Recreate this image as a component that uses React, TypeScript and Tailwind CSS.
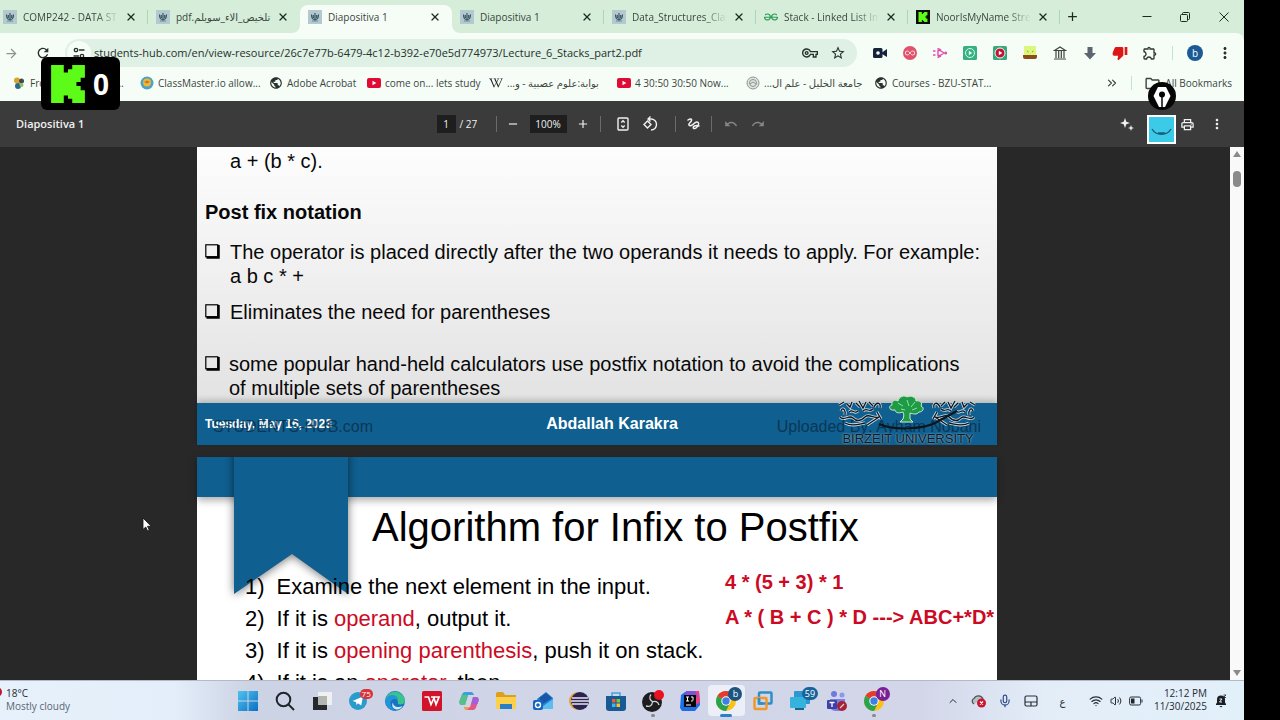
import React from 'react';
import { FaWikipediaW } from 'react-icons/fa';
import {
  MdAdd,
  MdArrowForward,
  MdMoreVert,
  MdOutlineExtension,
  MdOutlineFolder,
  MdOutlinePrint,
  MdOutlineVpnKey,
  MdPublic,
  MdRedo,
  MdRefresh,
  MdRemove,
  MdStarOutline,
  MdThumbDown,
  MdUndo,
} from 'react-icons/md';
import { SiGeeksforgeeks } from 'react-icons/si';
import { ChevronUp, ChevronsRight, Mic, Volume2, Wifi, X } from 'lucide-react';

const KICK_PATH = 'M0 0h12v7h4V4h4V0h12v12h-4v4h-4v4h4v4h4v12H20v-4h-4v-3h-4v7H0z';

const HubIcon = () => (
  <svg viewBox="0 0 14 14" className="h-3.5 w-3.5 shrink-0">
    <rect width="14" height="14" fill="#b3c8cf" />
    <path d="M3.500 4.500c0 4 1 5 3.500 5s3.500-1 3.500-5M7 3v8M5.300 5v3M8.700 5v3" stroke="#355560" strokeWidth="1.200" fill="none" />
    <path d="M4 11h6" stroke="#6d8890" />
  </svg>
);

const KickIcon = () => (
  <svg viewBox="0 0 14 14" className="h-3.5 w-3.5 shrink-0">
    <rect width="14" height="14" fill="#0b0d0b" />
    <path d={KICK_PATH} transform="translate(2.5 2) scale(.28)" fill="#5dfb18" />
  </svg>
);

const YoutubeIcon = () => (
  <svg viewBox="0 0 14 14" className="h-3.5 w-3.5 shrink-0">
    <rect y="2" width="14" height="10" rx="2" fill="#e00b35" />
    <path d="M5.5 4.8v4.4L9.300 7z" fill="#fff" />
  </svg>
);

const tabs = [
  { title: 'COMP242 - DATA ST', icon: <HubIcon />, cell: 'w-[148px] pl-[3px]', fade: true, line: true },
  { title: 'تلخيص_الاء_سويلم.pdf', icon: <HubIcon />, cell: 'w-[152px] pl-2 rounded-br-lg', rtl: true },
  { title: 'Diapositiva 1', icon: <HubIcon />, cell: 'w-[152px]', active: true },
  { title: 'Diapositiva 1', icon: <HubIcon />, cell: 'w-[152px] pl-2 rounded-bl-lg', line: true },
  { title: 'Data_Structures_Clas', icon: <HubIcon />, cell: 'w-[152px] pl-2', fade: true, line: true },
  {
    title: 'Stack - Linked List Im',
    icon: <SiGeeksforgeeks className="h-3.5 w-3.5 shrink-0 text-[#2f9e57]" />,
    cell: 'w-[152px] pl-2',
    fade: true,
    line: true,
  },
  { title: 'NoorIsMyName Stre', icon: <KickIcon />, cell: 'w-[152px] pl-2', fade: true, line: true },
];

const bookmarks = [
  {
    name: 'From the Cloud Se...',
    width: 'w-[128px]',
    icon: (
      <svg viewBox="0 0 14 14" className="h-3.5 w-3.5 shrink-0">
        <circle cx="5" cy="4.5" r="3" fill="#d8a422" />
        <circle cx="9.5" cy="5" r="2.5" fill="#3d4a50" />
        <circle cx="6" cy="10" r="3" fill="#2b6a8a" />
        <circle cx="9.5" cy="9" r="2" fill="#8fbf5a" />
      </svg>
    ),
  },
  {
    name: 'ClassMaster.io allow...',
    width: 'w-[129px]',
    icon: (
      <svg viewBox="0 0 14 14" className="h-3.5 w-3.5 shrink-0">
        <circle cx="7" cy="7" r="6.5" fill="#49a3c7" />
        <circle cx="7" cy="6.5" r="4" fill="#f0b637" />
        <path d="M4 6l3-1.5L10 6 7 7.500z" fill="#c9781f" />
      </svg>
    ),
  },
  { name: 'Adobe Acrobat', width: 'w-[98px]', icon: <MdPublic className="h-3.5 w-3.5 shrink-0 text-[#2a3230]" /> },
  { name: 'come on... lets study', width: 'w-[122px]', icon: <YoutubeIcon /> },
  {
    name: 'بوابة:علوم عصبية - و...',
    width: 'w-[128px]',
    rtl: true,
    icon: <FaWikipediaW className="h-3 w-3.5 shrink-0 text-[#20242a]" />,
  },
  { name: '4 30:50 30:50 Now...', width: 'w-[129px]', icon: <YoutubeIcon /> },
  {
    name: 'جامعة الخليل - علم ال...',
    width: 'w-[128px]',
    rtl: true,
    icon: (
      <svg viewBox="0 0 14 14" className="h-3.5 w-3.5 shrink-0" fill="none" stroke="#8d9690">
        <circle cx="7" cy="7" r="6" fill="#dfe5e0" />
        <circle cx="7" cy="7" r="3.500" />
        <path d="M4 8l3-2 3 2" />
      </svg>
    ),
  },
  { name: 'Courses - BZU-STAT...', width: 'w-[128px]', icon: <MdPublic className="h-3.5 w-3.5 shrink-0 text-[#2a3230]" /> },
];

const extensions = [
  {
    name: 'Camera',
    icon: (
      <svg viewBox="0 0 14 14" className="h-3.5 w-3.5">
        <rect y="2" width="9.500" height="10" rx="1.500" fill="#16233c" />
        <path d="M9 6.500L14 3v8L9 8z" fill="#16233c" />
        <circle cx="5" cy="7" r="1.800" fill="#fff" />
      </svg>
    ),
  },
  {
    name: 'Infinity',
    icon: (
      <svg viewBox="0 0 14 14" className="h-3.5 w-3.5">
        <circle cx="7" cy="7" r="7" fill="#e0526b" />
        <path d="M7 7c-1-1.500-1.800-2-2.700-2a2 2 0 0 0 0 4C5.200 9 6 8.500 7 7s1.800-2 2.700-2a2 2 0 0 1 0 4C8.800 9 8 8.500 7 7z" stroke="#fbdde1" fill="none" />
      </svg>
    ),
  },
  {
    name: 'Player',
    icon: (
      <svg viewBox="0 0 14 14" className="h-3.5 w-3.5" fill="none" stroke="#e04fae" strokeWidth="1.400">
        <path d="M5 4.500h2l4 2.500-4 2.500H5z" />
        <path d="M4.500 2.500L8 4M4.500 11.500L8 10M0 5h2.500M0 9h2.500" />
        <circle cx="12.800" cy="7" r=".8" />
      </svg>
    ),
  },
  {
    name: 'Recorder',
    icon: (
      <svg viewBox="0 0 14 14" className="h-3.5 w-3.5">
        <rect width="14" height="14" rx="1.500" fill="#35b181" />
        <circle cx="7" cy="7" r="4.500" stroke="#d9f7e8" fill="none" />
        <path d="M5.800 4.800v4.400L9.300 7z" fill="#e9fff3" />
      </svg>
    ),
  },
  {
    name: 'Video speed',
    icon: (
      <svg viewBox="0 0 14 14" className="h-3.5 w-3.5">
        <rect width="14" height="14" rx="1.500" fill="#35a97c" />
        <circle cx="7" cy="7" r="5" fill="#c51236" stroke="#e8fff2" />
        <path d="M5.800 4.800v4.400L9.300 7z" fill="#fff" />
      </svg>
    ),
  },
  {
    name: 'Cake',
    icon: (
      <svg viewBox="0 0 14 14" className="h-3.5 w-3.5">
        <path d="M1 0h12v9H1z" fill="#dcf77c" />
        <path d="M4 5l1.500 1M9 6l1.500-1" stroke="#8ca32c" />
        <path d="M0 9h14v2a2 2 0 0 1-2 2H2a2 2 0 0 1-2-2z" fill="#8c4d1c" />
      </svg>
    ),
  },
  {
    name: 'Archive',
    icon: (
      <svg viewBox="0 0 14 14" className="h-3.5 w-3.5" fill="none" stroke="#3b4440" strokeWidth="1.200">
        <path d="M1.500 4.500L7 1l5.500 3.500zM1 13h12M3 5v7M5.700 5v7M8.300 5v7M11 5v7" />
      </svg>
    ),
  },
  {
    name: 'Downloader',
    icon: (
      <svg viewBox="0 0 14 14" className="h-3.5 w-3.5">
        <path d="M4.500 1h5v6H13l-6 6.500L1 7h3.500z" fill="#5d6570" />
      </svg>
    ),
  },
  { name: 'Dislikes', icon: <MdThumbDown className="h-4 w-4 text-[#dd1616]" /> },
  { name: 'Extensions', icon: <MdOutlineExtension className="h-4 w-4 text-[#2e3833]" /> },
];

const ChromeIcon = ({ badge, color }: { badge: string; color: string }) => (
  <span className="relative">
    <svg viewBox="0 0 20 20" className="h-5 w-5">
      <circle cx="10" cy="10" r="10" fill="#fbc116" />
      <path d="M10 10L1.340 5A10 10 0 0 1 18.660 5z" fill="#e33b2e" />
      <path d="M10 10L1.340 5A10 10 0 0 0 10 20l4-8z" fill="#2ba24c" />
      <circle cx="10" cy="10" r="4.700" fill="#fff" />
      <circle cx="10" cy="10" r="3.700" fill="#3d7fe8" />
    </svg>
    <span className={`absolute -right-1.5 -top-1 flex h-3.5 w-3.5 items-center justify-center rounded-full text-[9px] leading-none text-white ${color}`}>
      {badge}
    </span>
  </span>
);

const apps = [
  {
    name: 'Start',
    icon: (
      <svg viewBox="0 0 20 20" className="h-5 w-5">
        <defs>
          <linearGradient id="win" x1="0" y1="0" x2="1" y2="1">
            <stop stopColor="#4fc3ee" />
            <stop offset="1" stopColor="#0b6fc2" />
          </linearGradient>
        </defs>
        <path d="M0 0h9.500v9.500H0zM10.500 0H20v9.500h-9.500zM0 10.500h9.500V20H0zM10.500 10.500H20V20h-9.500z" fill="url(#win)" />
      </svg>
    ),
  },
  {
    name: 'Search',
    icon: (
      <svg viewBox="0 0 20 20" className="h-5 w-5" fill="none" stroke="#20242c" strokeWidth="2">
        <circle cx="8.500" cy="8.500" r="6.800" />
        <path d="M13.500 13.500L19 19" />
      </svg>
    ),
  },
  {
    name: 'Task view',
    icon: (
      <svg viewBox="0 0 20 20" className="h-5 w-5">
        <rect x="6" y="1" width="14" height="13" fill="#eef0f1" />
        <rect x="1" y="6" width="14" height="13" fill="#26292b" />
        <rect x="6" y="5" width="9" height="9" fill="#b2b5b0" />
      </svg>
    ),
  },
  {
    name: 'Telegram',
    icon: (
      <span className="relative">
        <svg viewBox="0 0 20 20" className="h-5 w-5">
          <circle cx="9" cy="10" r="9" fill="#2b9bcb" />
          <path d="M3.500 10l10.500-4.500-1.800 9-3.200-2.300L7.500 14l-.5-3z" fill="#fff" />
        </svg>
        <span className="absolute -right-1 -top-0.5 rounded-full bg-[#d8323a] px-0.5 text-[8px] leading-[10px] text-white">75</span>
      </span>
    ),
  },
  {
    name: 'Edge',
    icon: (
      <svg viewBox="0 0 20 20" className="h-5 w-5">
        <circle cx="10" cy="10" r="10" fill="#1673c4" />
        <path d="M0.500 8A10 10 0 0 1 20 9c0 3-2 4.500-5 4.500-2 0-2.500-1-2-2C13 9 11 6.500 7.500 6.500 4 6.500 1.500 8 .5 10z" fill="#39c48d" />
        <path d="M.500 9C2 5 5 3.500 8 4c4 .5 5.500 3.500 4.700 6C12 7.500 6 6.500 5.500 12c0 4 3 7 6 7.700A10 10 0 0 1 .5 9z" fill="#2394d8" />
        <path d="M8 11.500c0 4 5 6 9.500 3.500-1 2-3 3.500-5.500 3.500-4 0-6-4-4-7z" fill="#cfe9f5" />
      </svg>
    ),
  },
  {
    name: 'WPS Office',
    icon: (
      <svg viewBox="0 0 20 20" className="h-5 w-5">
        <rect width="20" height="20" rx="1.500" fill="#d3132c" />
        <path d="M2.500 6h4l2.500 7.500L12 7l2 6.500L17 6H9" fill="none" stroke="#fff" strokeWidth="1.700" />
      </svg>
    ),
  },
  {
    name: 'Copilot',
    icon: (
      <svg viewBox="0 0 20 20" className="h-5 w-5">
        <path d="M6 1h6c2 0 2.500 1.500 3 3H9L6 14H3c-2 0-3-1.500-2.500-4L3 3.500C3.500 2 4.500 1 6 1z" fill="#3b9de0" />
        <path d="M.5 10L3 3.500 9 4 6 14H3c-2 0-3-1.500-2.500-4z" fill="#57c08a" />
        <path d="M14 19H8c-2 0-2.500-1.500-3-3h6l3-10h3c2 0 3 1.500 2.500 4L17 16.500c-.5 1.500-1.500 2.500-3 2.500z" fill="#e2568e" />
        <path d="M14 6h3c2 0 3 1.500 2.500 4l-1 3h-6z" fill="#a45fd6" />
        <path d="M8 19c-2 0-2.500-1.500-3-3h6z" fill="#f0a23c" />
      </svg>
    ),
  },
  {
    name: 'File Explorer',
    icon: (
      <svg viewBox="0 0 22 20" className="h-5 w-[22px]">
        <path d="M1 3c0-1 .5-2 2-2h5l2 3h11v5H1z" fill="#dc9f1e" />
        <path d="M1 6h20v12H1z" fill="#fbd04a" />
        <path d="M5 13h12v5H5z" fill="#2a7fc4" />
      </svg>
    ),
  },
  {
    name: 'Outlook',
    icon: (
      <svg viewBox="0 0 20 20" className="h-5 w-5">
        <path d="M4 8l9-7 7 6v10H6z" fill="#2380d4" />
        <path d="M6 7l7-5 6 5-9 6z" fill="#1a56a8" />
        <path d="M6 18l14-10v10z" fill="#59bdf2" />
        <rect y="9" width="10" height="10" rx="2" fill="#1565bf" />
        <circle cx="5" cy="14" r="2.500" stroke="#fff" strokeWidth="1.400" fill="none" />
      </svg>
    ),
  },
  {
    name: 'Eclipse',
    icon: (
      <svg viewBox="0 0 20 20" className="h-5 w-5">
        <circle cx="9" cy="10" r="9" fill="#e8a03b" />
        <circle cx="11" cy="10" r="9" fill="#2b2452" />
        <path d="M3 7h16M2 10h18M3 13h16" stroke="#e9e6f2" strokeWidth="1.300" />
      </svg>
    ),
  },
  {
    name: 'Microsoft Store',
    icon: (
      <svg viewBox="0 0 20 20" className="h-5 w-5">
        <path d="M6 5V2h8v3" stroke="#3fa3dc" strokeWidth="1.500" fill="none" />
        <path d="M0 5h20v12a3 3 0 0 1-3 3H3a3 3 0 0 1-3-3z" fill="#175a94" />
        <path d="M6 8h3.500v3.500H6z" fill="#ee5b37" />
        <path d="M10.500 8H14v3.500h-3.500z" fill="#85c141" />
        <path d="M6 12.500h3.500V16H6z" fill="#3fb4ee" />
        <path d="M10.500 12.500H14V16h-3.500z" fill="#fbc02d" />
      </svg>
    ),
  },
  {
    name: 'OBS Studio',
    running: 'w-1 bg-[#84898f]',
    icon: (
      <svg viewBox="0 0 22 22" className="h-[22px] w-[22px]">
        <circle cx="10" cy="12" r="10" fill="#1d1d20" />
        <g fill="none" stroke="#d6d6d8" strokeWidth="1.300">
          <path d="M9 4.500c-2.500 3-1 6 2 7.500M17 15c-1-3.500-4-4.500-7-3M4 16c4 1 6-.5 6.500-4" />
        </g>
        <circle cx="17" cy="5" r="5" fill="#ea1220" />
      </svg>
    ),
  },
  {
    name: 'IntelliJ IDEA',
    icon: (
      <svg viewBox="0 0 20 20" className="h-5 w-5">
        <path d="M1 4l4-3h14l1 13-5 6H2l-2-3z" fill="#1c6fe8" />
        <path d="M13 0h6l1 11-4 3z" fill="#ef3f7f" />
        <path d="M6 0h9l3 6H4z" fill="#7c52d8" />
        <rect x="4" y="4" width="12" height="12" fill="#07070a" />
        <path d="M6 6h3M7.500 6v4M6 10h3M11 6h2v3c0 1-.5 1-2 1M6 14h5" stroke="#fff" fill="none" />
      </svg>
    ),
  },
  { name: 'Chrome', active: true, running: 'w-3 bg-[#2c80c9]', icon: <ChromeIcon badge="b" color="bg-[#1c5480]" /> },
  {
    name: 'VMware',
    icon: (
      <svg viewBox="0 0 20 20" className="h-5 w-5" fill="none" strokeWidth="2.500">
        <rect x="6" y="1.500" width="12.500" height="11" rx="1" stroke="#2f8fc4" />
        <rect x="1.500" y="7" width="12" height="11" rx="1" stroke="#f0982c" />
        <path d="M6 7v5.500h4" stroke="#2f8fc4" />
      </svg>
    ),
  },
  {
    name: 'Remote Desktop',
    icon: (
      <span className="relative">
        <svg viewBox="0 0 20 20" className="h-5 w-5">
          <rect x="4" width="16" height="13" rx="1" fill="#2d97cf" />
          <rect y="6" width="16" height="11" rx="1" fill="#35b3dd" />
          <path d="M5 17h9v2H5z" fill="#1b648f" />
        </svg>
        <span className="absolute -right-2 -top-1 rounded-full bg-[#17649a] px-[3px] text-[9px] leading-[13px] text-white">59</span>
      </span>
    ),
  },
  {
    name: 'Teams',
    icon: (
      <svg viewBox="0 0 20 20" className="h-5 w-5">
        <circle cx="7" cy="3" r="3" fill="#6f79dc" />
        <circle cx="15" cy="4" r="2.500" fill="#8e96ea" />
        <path d="M3 8h15v7a5 5 0 0 1-5 5H8a5 5 0 0 1-5-5z" fill="#7a80e2" />
        <rect y="9" width="10" height="9" rx="1" fill="#3c41a5" />
        <path d="M2.500 11.500h5M5 11.500V16" stroke="#fff" strokeWidth="1.300" />
        <circle cx="15" cy="15" r="5" fill="#a52337" />
        <path d="M13 17l4-4" stroke="#e9c9cf" strokeWidth="1.300" />
      </svg>
    ),
  },
  { name: 'Chrome profile', running: 'w-1 bg-[#84898f]', icon: <ChromeIcon badge="N" color="bg-[#7a1f96]" /> },
];

const Separator = () => <span className="h-4 w-px bg-[#6b6b6b]" />;

const TabStrip = () => (
  <div className="flex h-[33px] bg-[#f6fdf6]">
    {tabs.map((tab, index) => (
      <div
        key={index}
        className={`min-w-0 ${tab.cell} ${tab.active ? 'bg-[linear-gradient(#d5edd9_24px,#f6fdf6_24px)] pt-[5px]' : 'bg-[#d5edd9]'}`}
      >
        <div className={`relative flex h-full items-center gap-1.5 ${tab.active ? 'rounded-t-lg bg-[#f6fdf6] pb-[5px] pl-2' : ''}`}>
          {tab.icon}
          <button
            className={`min-w-0 flex-1 whitespace-nowrap text-left ${tab.fade ? 'mask-[linear-gradient(to_right,#000_75%,transparent)]' : ''}`}
          >
            <span dir={tab.rtl ? 'rtl' : undefined} className={tab.rtl ? 'inline-block' : ''}>
              {tab.title}
            </span>
          </button>
          <button aria-label="Close tab" className="mr-[11px] text-[#1d2a22]">
            <X className="h-3 w-3" strokeWidth={2.500} />
          </button>
          {tab.line && <span className="absolute right-0 h-3.5 w-px bg-[#a5dab2]" />}
        </div>
      </div>
    ))}
    <div className="flex flex-1 items-center justify-between bg-[#d5edd9] pl-[5px] text-[#1d2a22]">
      <button aria-label="New tab">
        <MdAdd className="h-[15px] w-[15px]" />
      </button>
      <div className="flex">
        <button aria-label="Minimize" className="flex w-[38px] justify-center">
          <svg viewBox="0 0 10 10" className="h-2.5 w-2.5" stroke="currentColor">
            <path d="M0.500 4.500h9" />
          </svg>
        </button>
        <button aria-label="Restore" className="flex w-[38px] justify-center">
          <svg viewBox="0 0 10 10" className="h-2.5 w-2.5" fill="none" stroke="currentColor">
            <rect x=".5" y="2.500" width="7" height="7" rx="1" />
            <path d="M2.500 2V1.500a1 1 0 0 1 1-1h5a1 1 0 0 1 1 1v5a1 1 0 0 1-1 1H8" />
          </svg>
        </button>
        <button aria-label="Close" className="flex w-10 justify-center">
          <svg viewBox="0 0 10 10" className="h-2.5 w-2.5" stroke="currentColor">
            <path d="M.5.5l9 9M9.500.5l-9 9" />
          </svg>
        </button>
      </div>
    </div>
  </div>
);

const AddressBar = () => (
  <div className="bg-[#d5edd9]">
    <div className="flex h-[38px] items-center rounded-tr-lg bg-[#f6fdf6] pt-0.5 text-[#26312b]">
      <div className="flex w-[65px] items-center gap-4 pl-1">
        <button aria-label="Forward">
          <MdArrowForward className="h-[15px] w-[15px] text-[#8b958e]" />
        </button>
        <button aria-label="Reload">
          <MdRefresh className="h-4 w-4" />
        </button>
      </div>
      <div className="flex h-7 min-w-0 flex-1 items-center rounded-full bg-[#dff0e4] pl-0.5 pr-[11px]">
        <button aria-label="Site information" className="flex h-6 w-6 shrink-0 items-center justify-center rounded-full bg-[#f6fdf6]">
          <svg viewBox="0 0 12 12" className="h-3 w-3" fill="none" stroke="#26312b" strokeWidth="1.300">
            <circle cx="3" cy="3" r="1.700" />
            <circle cx="9" cy="9" r="1.700" />
            <path d="M6 3h5.500M.5 9H6" />
          </svg>
        </button>
        <input
          aria-label="Address"
          defaultValue="students-hub.com/en/view-resource/26c7e77b-6479-4c12-b392-e70e5d774973/Lecture_6_Stacks_part2.pdf"
          className="min-w-0 flex-1 bg-transparent pl-[3px] text-[11px] outline-none"
        />
        <button aria-label="Passwords" className="mr-3">
          <MdOutlineVpnKey className="h-4 w-4" />
        </button>
        <button aria-label="Bookmark this page">
          <MdStarOutline className="h-4 w-4" />
        </button>
      </div>
      <div className="flex items-center pl-2">
        {extensions.map((ext) => (
          <button key={ext.name} aria-label={ext.name} className="flex w-[30px] justify-center">
            {ext.icon}
          </button>
        ))}
        <span className="mx-[7px] h-3.5 w-px bg-[#bfe6c9]" />
        <button className="mx-[7px] flex h-4 w-4 items-center justify-center rounded-full bg-[#1b5a94] leading-none text-white">b</button>
        <button aria-label="Menu" className="flex w-[30px] justify-center">
          <MdMoreVert className="h-[18px] w-[18px]" />
        </button>
        <span className="w-1" />
      </div>
    </div>
  </div>
);

const BookmarksBar = () => (
  <div className="flex h-[30px] items-center bg-[#f6fdf6] pb-1.5 pl-3 pr-3 text-[#3b453f]">
    {bookmarks.map((mark) => (
      <a key={mark.name} href="#" className={`flex min-w-0 items-center gap-1 whitespace-nowrap ${mark.width}`}>
        {mark.icon}
        <span dir={mark.rtl ? 'rtl' : undefined}>{mark.name}</span>
      </a>
    ))}
    <div className="flex flex-1 items-center justify-end whitespace-nowrap">
      <button aria-label="More bookmarks">
        <ChevronsRight className="h-3.5 w-3.5" />
      </button>
      <span className="mx-3 h-3.5 w-px bg-[#bfe6c9]" />
      <button className="flex items-center gap-1">
        <MdOutlineFolder className="h-[17px] w-[17px]" />
        All Bookmarks
      </button>
    </div>
  </div>
);

const PdfToolbar = () => (
  <div className="flex h-[46px] items-center bg-[#3b3b3b] text-[#f1f1f1]">
    <div className="flex-1 basis-0 pl-4 text-[11px] font-semibold">Diapositiva 1</div>
    <div className="flex items-center">
      <input aria-label="Page" defaultValue="1" className="h-[18px] w-[19px] bg-[#1e1e1e] text-center outline-none" />
      <span className="w-10 pl-1">/ 27</span>
      <Separator />
      <button aria-label="Zoom out" className="flex w-[33px] justify-center">
        <MdRemove className="h-3.5 w-3.5" />
      </button>
      <input aria-label="Zoom" defaultValue="100%" className="h-[18px] w-[37px] bg-[#1e1e1e] text-center outline-none" />
      <button aria-label="Zoom in" className="flex w-[33px] justify-center">
        <MdAdd className="h-3.5 w-3.5" />
      </button>
      <Separator />
      <button aria-label="Fit to page" className="ml-[9px] flex w-[27px] justify-center">
        <svg viewBox="0 0 14 14" className="h-3.5 w-3.5" fill="none" stroke="currentColor" strokeWidth="1.400">
          <rect x="2" y="1" width="10" height="12" rx="1" />
          <path d="M5.300 5.500L7 3.800l1.700 1.700M5.300 8.500L7 10.200l1.700-1.700" />
        </svg>
      </button>
      <button aria-label="Rotate" className="mr-[11px] flex w-[27px] justify-center">
        <svg viewBox="0 0 16 16" className="h-4 w-4" fill="none" stroke="currentColor" strokeWidth="1.400">
          <path d="M5.500 5L9 8.500 5.500 12 2 8.500z" />
          <path d="M6.500 3H9a5.500 5.500 0 0 1 0 11M8.500.5L6 3l2.500 2.500" />
        </svg>
      </button>
      <Separator />
      <button aria-label="Draw" className="flex w-[35px] justify-center">
        <svg viewBox="0 0 14 14" className="h-3.5 w-3.5" fill="none" stroke="currentColor" strokeWidth="1.500" strokeLinecap="round">
          <path d="M2 3c2-1.500 4-1.500 3.500.5S2 6.500 3 8s3 .5 5-1.500 4-2 4.500-.5-1.500 5-3.500 5.500-2.500-1.500-.5-2.500 3-.8 4.500 0" />
        </svg>
      </button>
      <Separator />
      <button aria-label="Undo" className="ml-1.5 flex w-[27px] justify-center text-[#858585]">
        <MdUndo className="h-3.5 w-3.5" />
      </button>
      <button aria-label="Redo" className="flex w-[27px] justify-center text-[#858585]">
        <MdRedo className="h-3.5 w-3.5" />
      </button>
    </div>
    <div className="flex flex-1 basis-[52px] items-center justify-end pr-[19px]">
      <button aria-label="Assistant">
        <svg viewBox="0 0 14 14" className="h-3.5 w-3.5" fill="currentColor">
          <path d="M5 1l1.300 3.700L10 6 6.300 7.300 5 11 3.700 7.300 0 6l3.700-1.300zM11 8l.8 2.200L14 11l-2.200.8L11 14l-.8-2.200L8 11l2.200-.8z" />
        </svg>
      </button>
      <button aria-label="Print" className="ml-[46px]">
        <MdOutlinePrint className="h-[15px] w-[15px]" />
      </button>
      <button aria-label="More actions" className="ml-3.5">
        <MdMoreVert className="h-4 w-4" />
      </button>
    </div>
  </div>
);

const Bullet = () => (
  <svg viewBox="0 0 15 15" className="mt-1 h-[15px] w-[15px] shrink-0">
    <rect x=".8" y=".8" width="12" height="12" fill="none" stroke="#000" strokeWidth="1.200" />
    <path d="M13.500 1v12.500H1.500" fill="none" stroke="#000" strokeWidth="2.500" />
  </svg>
);

const CALLIGRAPHY =
  'M2 10l5-3M4 16c2-5 5 0 4 4M10 9l3 3 2-5M12 17c4-4 5 3 9-1M19 8l4 4M22 6l4 7 3-6M26 16c4-4 6 2 10-2M32 7l4 4M37 12c3-6 7-4 6 1M3 22c4 5 9-3 13 1s8 3 12-1 8 2 14 0M8 28c7 4 14 1 20 0M30 30l12-8M40 17l4 7';

const UniversityLogo = () => (
  <div className="absolute -top-2 right-[18px] flex w-[142px] flex-col items-center">
    <svg viewBox="0 0 142 38" className="h-[38px] w-full" fill="none">
      <g stroke="#c9dbe6" strokeWidth="3">
        <path d={CALLIGRAPHY} />
        <path d={CALLIGRAPHY} transform="matrix(-1 0 0 1 140 0)" />
      </g>
      <g stroke="#10161c" strokeWidth="1.300">
        <path d={CALLIGRAPHY} />
        <path d={CALLIGRAPHY} transform="matrix(-1 0 0 1 140 0)" />
      </g>
      <path d="M42 29c12 6 42 6 56-1l22-12" stroke="#0c141c" strokeWidth="2" />
      <path
        d="M66 24c1-3 1-5 0-7-5 2-8 0-8-2-6 1-7-4-3-5-1-4 3-6 6-4 1-5 7-6 9-4 4-2 9 0 9 4 4-1 7 2 5 5 4 2 2 6-2 6-2 3-6 2-9 1v6l3 3H63z"
        fill="#1f9b45"
        stroke="#cfead6"
        strokeWidth="1"
      />
      <path d="M61 8l5 3M70 5l2 6M78 7l-4 5M64 14l4 1M80 13l-5 2" stroke="#90dda5" />
    </svg>
    <span className="whitespace-nowrap text-[13px] leading-3 text-[#101820] [text-shadow:0_0_2px_#b9cfdd]">BIRZEIT UNIVERSITY</span>
  </div>
);

const NotationSlide = () => (
  <section className="flex flex-col bg-[linear-gradient(#fdfdfd,#dedede)] text-xl leading-6 text-[#080808]">
    <div className="px-2 pt-0.5">
      <p className="pl-[25px]">a + (b * c).</p>
      <h2 className="mt-[27px] font-bold">Post fix notation</h2>
      <ul className="mt-4">
        <li className="flex gap-2.5">
          <Bullet />
          <span>
            The operator is placed directly after the two operands it needs to apply. For example:
            <br />a b c * +
          </span>
        </li>
        <li className="mt-3 flex gap-2.5">
          <Bullet />
          <span>Eliminates the need for parentheses</span>
        </li>
        <li className="mt-7 flex gap-[9px]">
          <Bullet />
          <span>
            some popular hand-held calculators use postfix notation to avoid the complications
            <br />
            of multiple sets of parentheses
          </span>
        </li>
      </ul>
    </div>
    <footer className="relative mt-[3px] grid h-[42px] grid-cols-3 items-center bg-[#0f5f90] px-2 text-white shadow-[0_-3px_6px_rgba(0,0,0,0.2)]">
      <span className="text-xs font-bold">Tuesday, May 16, 2023</span>
      <span className="pl-[30px] text-center text-base font-bold">Abdallah Karakra</span>
      <span className="absolute left-4 top-3 text-base leading-6 text-[#0a2c47]/80">STUDENTS-HUB.com</span>
      <span className="absolute right-4 top-3 text-base leading-6 text-[#0a2c47]/80">Uploaded By: Ayham Nobani</span>
      <UniversityLogo />
    </footer>
  </section>
);

const AlgorithmSlide = () => (
  <section className="relative mt-3 bg-white text-black">
    <div className="h-10 bg-[#0f5f90] shadow-[0_3px_8px_rgba(0,0,0,0.35)]" />
    <svg viewBox="0 0 134 150" className="absolute left-[27px] top-0 h-[150px] w-[134px]">
      <path d="M10 -10h114v147L68 97 10 137z" fill="#0f5f90" className="drop-shadow-[0_1px_5px_rgba(0,0,0,0.55)]" />
    </svg>
    <h1 className="relative mt-1.5 pl-[175px] text-[40px] leading-[48px]">Algorithm for Infix to Postfix</h1>
    <div className="relative mt-5 flex">
      <ol className="w-[528px] pl-12 text-[22px] leading-8">
        <li className="flex gap-3"><span>1)</span><span>Examine the next element in the input.</span></li>
        <li className="flex gap-3"><span>2)</span><span>If it is <b className="font-normal text-[#cc0a24]">operand</b>, output it.</span></li>
        <li className="flex gap-3"><span>3)</span><span>If it is <b className="font-normal text-[#cc0a24]">opening parenthesis</b>, push it on stack.</span></li>
        <li className="flex gap-3"><span>4)</span><span>If it is an <b className="font-normal text-[#cc0a24]">operator</b>, then</span></li>
      </ol>
      <div className="whitespace-nowrap text-xl font-bold leading-[35px] text-[#cc0a24]">
        <p className="-mt-1.5">4 * (5 + 3) * 1</p>
        <p>A * ( B + C ) * D ---&gt; ABC+*D*</p>
      </div>
    </div>
  </section>
);

const Viewer = () => (
  <div className="relative flex min-h-0 flex-1 bg-[#282828]">
    <div className="flex flex-1 justify-center overflow-hidden pr-9 font-['Liberation_Sans',Arial,sans-serif]">
      <div className="w-full max-w-[800px]">
        <NotationSlide />
        <AlgorithmSlide />
      </div>
    </div>
    <div className="flex w-[14px] flex-col items-center justify-between bg-[#f9f9f9] py-1">
      <div className="flex flex-col items-center gap-3.5">
        <span className="border-x-4 border-b-[6px] border-x-transparent border-b-[#8a8a8a]" />
        <span className="h-4 w-2 rounded-full bg-[#8a8a8a]" />
      </div>
      <span className="border-x-4 border-t-[6px] border-x-transparent border-t-[#8a8a8a]" />
    </div>
    <svg viewBox="0 0 12 16" className="absolute left-[142px] top-[370px] h-4 w-3">
      <path d="M1 1v11.500l2.800-2.500 1.800 4 1.700-.8-1.800-3.900h3.700z" fill="#fff" stroke="#111" strokeWidth=".8" />
    </svg>
  </div>
);

const Taskbar = () => (
  <div className="flex h-10 shrink-0 items-center border-t border-[#b4b9c6] bg-[linear-gradient(to_right,#e6f1fb_0%,#e4eefa_14%,#ccd3e4_20%,#d0d5e8_45%,#d3d6e9_74%,#e3edf8_84%,#e2f0fa_100%)] text-[#262b33]">
    <div className="relative w-[230px] pb-0.5 pl-1.5 leading-[13px]">
      <span className="absolute -left-2 top-0 h-2.5 w-2.5 rounded-full bg-[#c4142b]" />
      <p>18°C</p>
      <p className="text-[#5a6572]">Mostly cloudy</p>
    </div>
    <div className="grid h-full w-[662px] grid-cols-18">
      {apps.map((app) => (
        <button
          key={app.name}
          aria-label={app.name}
          className={`relative my-1 flex items-center justify-center rounded ${app.active ? 'bg-[#eceff8]' : ''}`}
        >
          {app.icon}
          {app.running && <span className={`absolute -bottom-px h-[3px] rounded-full ${app.running}`} />}
        </button>
      ))}
    </div>
    <div className="flex flex-1 items-center justify-end pr-[17px]">
      <button aria-label="Show hidden icons" className="flex w-[26px] justify-center">
        <ChevronUp className="h-3 w-3" />
      </button>
      <button aria-label="OneDrive" className="flex w-[26px] justify-center">
        <svg viewBox="0 0 16 14" className="h-3.5 w-4">
          <path d="M3 10a3 3 0 0 1 0-5.500A5 5 0 0 1 12 5" fill="#b9bec3" stroke="#4d545b" strokeWidth="1.300" />
          <circle cx="10.500" cy="9" r="4.500" fill="#cb1530" />
          <path d="M9 7.500l3 3M12 7.500l-3 3" stroke="#fff" strokeWidth="1.200" />
        </svg>
      </button>
      <button aria-label="Microphone" className="flex w-[26px] justify-center">
        <Mic className="h-3.5 w-3.5 text-[#2e4a8e]" />
      </button>
      <button aria-label="Touchpad" className="flex w-[26px] justify-center">
        <svg viewBox="0 0 14 12" className="h-3 w-3.5" fill="none" stroke="#2a3038" strokeWidth="1.200">
          <rect x="1" y="1" width="12" height="10" rx="1.500" />
          <path d="M1 7h12M7 7v4" />
        </svg>
      </button>
      <button className="flex w-[37px] justify-center">ع</button>
      <div className="ml-2 flex w-[54px] items-center justify-between">
        <Wifi className="h-3.5 w-3.5" />
        <Volume2 className="h-3 w-3" />
        <svg viewBox="0 0 14 10" className="h-2.5 w-3.5">
          <rect x=".6" y="1" width="11" height="8" rx="1.500" fill="none" stroke="#2a3038" />
          <rect x="2" y="2.500" width="3.500" height="5" fill="#20252b" />
          <path d="M13 3.500v3" stroke="#2a3038" />
        </svg>
      </div>
      <div className="w-16 whitespace-nowrap pb-0.5 text-right leading-[13px]">
        <p>12:12 PM</p>
        <p>11/30/2025</p>
      </div>
      <button aria-label="Notifications" className="ml-2">
        <svg viewBox="0 0 12 14" className="h-3.5 w-3">
          <path d="M1 10l1-1.500V5.500a4 4 0 0 1 8 0v3L11 10v1H1zM4.500 12h3L6 13.500z" fill="#1a1f26" />
          <path d="M4.500 5h2.500l-2.500 3H7" stroke="#fff" fill="none" strokeWidth=".9" />
          <path d="M8.500 1H11L8.500 3.500H11" stroke="#1a1f26" fill="none" strokeWidth=".8" />
        </svg>
      </button>
    </div>
  </div>
);

const App = () => {
  return (
    <div className="flex h-screen overflow-hidden bg-black font-['Open_Sans','DejaVu_Sans',sans-serif] text-[10px] leading-4 text-[#3a453f]">
      <main className="relative flex min-w-0 flex-1 flex-col">
        <TabStrip />
        <AddressBar />
        <BookmarksBar />
        <PdfToolbar />
        <Viewer />
        <Taskbar />

        <div className="absolute left-[41px] top-[57px] flex h-[53px] w-[79px] items-center rounded-md bg-black pl-2.5">
          <svg viewBox="0 0 32 36" className="h-[38px] w-[34px]">
            <path d={KICK_PATH} fill="#5dfb18" />
          </svg>
          <span className="ml-2 text-[28px] font-bold leading-8 text-white">0</span>
        </div>

        <div className="absolute right-[68px] top-[82px] flex flex-col items-center gap-[5px]">
          <svg viewBox="0 0 28 28" className="h-7 w-7">
            <circle cx="14" cy="14" r="14" fill="#060606" />
            <path d="M10 5h8l4.500 9L17 25h-6L5.500 14z" fill="#fff" />
            <circle cx="14" cy="12.500" r="3" fill="#060606" />
            <path d="M14 13v12" stroke="#060606" strokeWidth="1.500" />
          </svg>
          <svg viewBox="0 0 29 29" className="h-[29px] w-[29px]">
            <rect x="1" y="1" width="27" height="27" fill="#3bcbe9" stroke="#fff" strokeWidth="2" />
            <path d="M5 14c4 7 15 7 19 0M11 18h7" fill="none" stroke="#1b5f78" strokeWidth="1.400" />
          </svg>
        </div>
      </main>
      <aside className="w-9 shrink-0 bg-black" />
    </div>
  );
};

export default App;
